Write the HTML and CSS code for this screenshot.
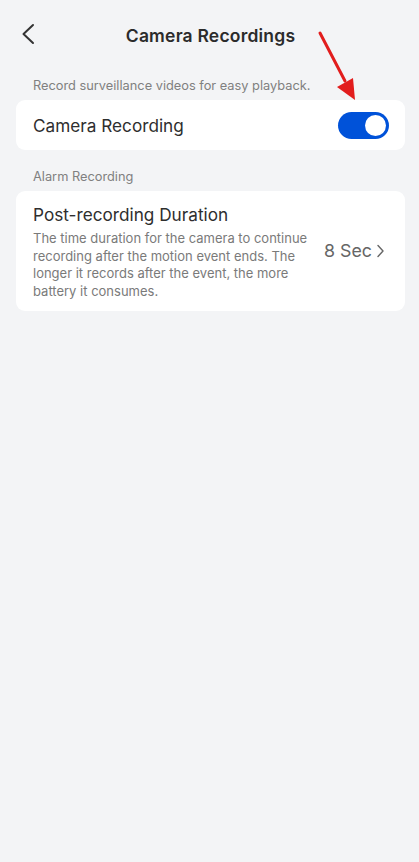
FILE: index.html
```html
<!DOCTYPE html>
<html>
<head>
<meta charset="utf-8">
<link rel="stylesheet" href="styles.css">
</head>
<body>
<div class="page">
  <header class="nav">
    <button class="back" aria-label="Back">
      <svg width="14" height="22" viewBox="0 0 14 22"><path d="M12 2 L2.5 11 L12 20" fill="none" stroke="#333" stroke-width="2" stroke-linecap="round" stroke-linejoin="round"/></svg>
    </button>
    <h1 class="title">Camera Recordings</h1>
  </header>

  <p class="caption first">Record surveillance videos for easy playback.</p>
  <section class="card row">
    <span class="label">Camera Recording</span>
    <span class="toggle"><span class="knob"></span></span>
  </section>

  <p class="caption">Alarm Recording</p>
  <section class="card row tall">
    <div class="text">
      <div class="label">Post-recording Duration</div>
      <div class="desc">The time duration for the camera to continue recording after the motion event ends. The longer it records after the event, the more battery it consumes.</div>
    </div>
    <div class="value">8 Sec
      <svg width="9" height="14" viewBox="0 0 9 14"><path d="M2 1.5 L7 7 L2 12.5" fill="none" stroke="#666" stroke-width="1.4" stroke-linecap="round" stroke-linejoin="round"/></svg>
    </div>
  </section>

  <svg class="arrow" width="60" height="80" viewBox="0 0 60 80">
    <line x1="5" y1="3" x2="30" y2="51" stroke="#e21d1d" stroke-width="3" stroke-linecap="round"/>
    <polygon points="40,70 22,57 38,48" fill="#e21d1d"/>
  </svg>
</div>
</body>
</html>
```

FILE: styles.css
```css
* { box-sizing: border-box; }
html, body { margin: 0; padding: 0; }
body {
  background: #f3f4f6;
  font-family: Inter, "Noto Sans", sans-serif;
  color: #333;
  width: 419px;
  height: 862px;
}
.page {
  position: relative;
  padding: 0 14px 0 16px;
}
.nav {
  height: 70px;
  display: flex;
  align-items: center;
  justify-content: center;
  position: relative;
}
.back {
  position: absolute;
  left: 5px;
  top: 23px;
  border: 0;
  background: none;
  padding: 0;
  width: 14px;
  height: 22px;
}
.title {
  margin: 0;
  font-size: 17.5px;
  font-weight: 600;
  color: #2b2b2b;
  letter-spacing: 0.2px;
}
.caption {
  margin: 0;
  padding: 0 17px;
  font-size: 12.8px;
  color: #808080;
  line-height: 18px;
  height: 30px;
  padding-top: 7px;
}
.card {
  background: #fff;
  border-radius: 9px;
}
.row {
  display: flex;
  align-items: center;
  justify-content: space-between;
  padding: 0 16px 0 17px;
  height: 50px;
  margin-bottom: 11px;
}
.label {
  font-size: 17.2px;
  color: #2e2e2e;
}
.toggle {
  width: 51px;
  height: 27px;
  border-radius: 14px;
  background: #0052d9;
  position: relative;
  display: block;
}
.knob {
  position: absolute;
  right: 3px;
  top: 3px;
  width: 21px;
  height: 21px;
  border-radius: 50%;
  background: #fff;
}
.row.tall {
  height: 120px;
  align-items: flex-start;
  padding-top: 13px;
  padding-right: 20px;
}
.text { width: 280px; }
.desc {
  margin-top: 5px;
  font-size: 13px;
  line-height: 17.5px;
  color: #7a7a7a;
}
.value {
  align-self: center;
  margin-top: -14px;
  display: flex;
  align-items: center;
  gap: 4px;
  font-size: 17.8px;
  color: #666;
}
.arrow {
  position: absolute;
  left: 315px;
  top: 30px;
}
```
